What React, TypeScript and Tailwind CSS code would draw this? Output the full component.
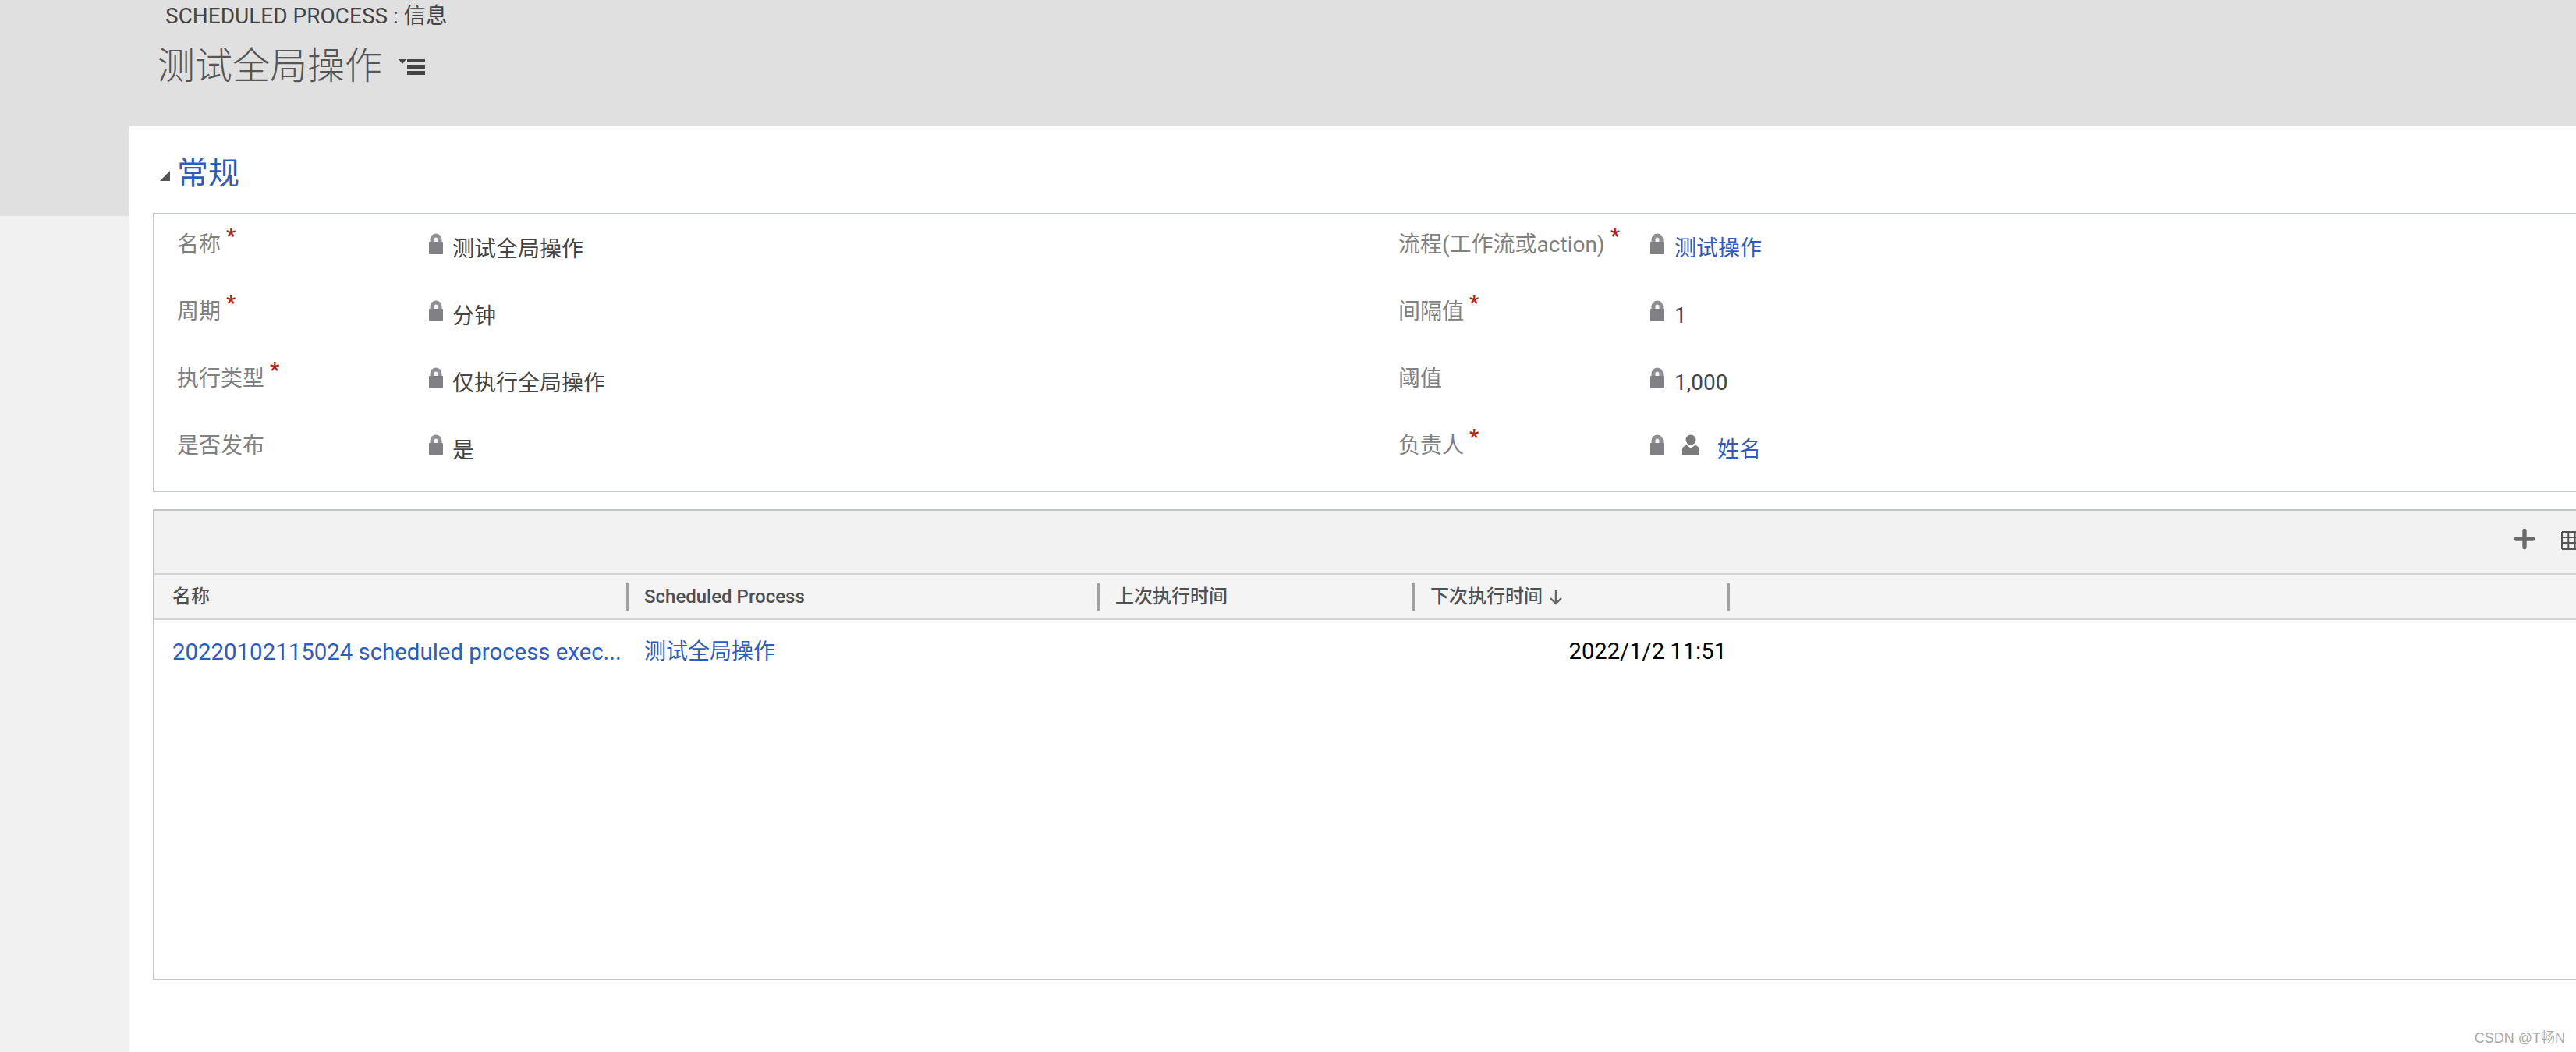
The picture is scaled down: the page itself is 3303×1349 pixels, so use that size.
import { Plus } from 'lucide-react'

const sans = "font-['Roboto','Noto_Sans_CJK_SC',sans-serif]"

function Lock() {
    return (
        <svg width="18" height="27" viewBox="0 0 18 27" className="shrink-0">
            <path d="M1.5 13V8a7.5 7.5 0 0 1 15 0v5z" fill="#909094" />
            <path d="M6.5 12V8a2.5 2.5 0 0 1 5 0v4z" fill="#f4f4f4" />
            <rect x="0" y="11" width="18" height="16" rx="1" fill="#808085" />
        </svg>
    )
}

function Star() {
    return <span className="text-[#b3261e] text-[27px] leading-none font-bold -translate-y-[5px] ml-[7px]">*</span>
}

function Field({ label, req, value, link, person, right }: { label: string; req?: boolean; value: string; link?: boolean; person?: boolean; right?: boolean }) {
    return (
        <div className="flex h-[86px]">
            <div className={`flex items-start pt-[20px] text-[#808080] text-[28px] leading-[38px] ${right ? 'w-[323px]' : 'w-[323px]'}`}>
                <span>{label}</span>
                {req && <Star />}
            </div>
            <div className={`flex items-start pt-[24px] ${right ? 'gap-[13px]' : 'gap-[12px]'}`}>
                <Lock />
                {person && (
                    <svg width="24" height="26" viewBox="0 0 24 26" className="shrink-0 mx-[9px]">
                        <circle cx="12" cy="7" r="6.5" fill="#7a7a7a" />
                        <path d="M1 26v-7c0-3 4-5 6-5l5 4 5-4c2 0 6 2 6 5v7z" fill="#7a7a7a" />
                    </svg>
                )}
                <span className={`text-[28px] leading-[36px] ${right ? 'mt-[2px]' : 'mt-[3px]'} ${link ? 'text-[#2f5cb8]' : 'text-[#444444]'}`}>{value}</span>
            </div>
        </div>
    )
}

function HeaderCell({ title, width, arrow, first }: { title: string; width: string; arrow?: boolean; first?: boolean }) {
    return (
        <div className={`flex items-center h-full ${first ? 'pl-[23px]' : 'pl-[20px]'} ${width}`}>
            <span className="text-[24px] text-[#505050] font-medium">{title}</span>
            {arrow && (
                <svg width="18" height="20" viewBox="0 0 18 20" className="ml-[8px] mt-[2px]">
                    <path d="M9 1v17M2 11l7 7 7-7" stroke="#666666" strokeWidth="2.4" fill="none" />
                </svg>
            )}
        </div>
    )
}

function Divider() {
    return <div className="w-[3px] h-[35px] bg-[#a0a0a0] shrink-0" />
}

export default function App() {
    return (
        <div className={`relative w-[3303px] h-[1349px] overflow-hidden bg-[#f0f0f0] ${sans}`}>
            <div className="h-[277px] bg-[#e0e0e0] pl-[202px]">
                <div className="pt-[2px] pl-[10px] text-[28px] leading-[38px] text-[#444444]">SCHEDULED PROCESS : 信息</div>
                <div className="flex items-center mt-[10px]">
                    <span className="text-[48px] leading-[70px] font-light text-[#555555]">测试全局操作</span>
                    <svg width="34" height="20" viewBox="0 0 34 20" className="ml-[21px] mt-[2px]">
                        <path d="M0 0h10l-5 6z" fill="#444444" />
                        <rect x="11" y="0" width="23" height="4" fill="#444444" />
                        <rect x="11" y="7" width="23" height="5" fill="#444444" />
                        <rect x="11" y="15" width="23" height="5" fill="#444444" />
                    </svg>
                </div>
            </div>
            <div className="absolute left-[166px] top-[162px] right-0 bottom-0 bg-white pl-[30px]">
                <div className="flex items-center h-[111px] pl-[9px] pt-[11px]">
                    <svg width="13" height="13" viewBox="0 0 13 13" className="mt-[4px]">
                        <path d="M13 0v13H0z" fill="#555555" />
                    </svg>
                    <span className="ml-[9px] text-[40px] leading-[56px] text-[#2f5cb8]">常规</span>
                </div>
                <div className="flex h-[358px] border-2 border-r-0 border-[#c2c6c6] pl-[29px]">
                    <div className="w-[1566px]">
                        <Field label="名称" req value="测试全局操作" />
                        <Field label="周期" req value="分钟" />
                        <Field label="执行类型" req value="仅执行全局操作" />
                        <Field label="是否发布" value="是" />
                    </div>
                    <div>
                        <Field right label="流程(工作流或action)" req value="测试操作" link />
                        <Field right label="间隔值" req value="1" />
                        <Field right label="阈值" value="1,000" />
                        <Field right label="负责人" req value="姓名" link person />
                    </div>
                </div>
                <div className="mt-[22px] h-[604px] border-2 border-r-0 border-[#c2c6c6] flex flex-col">
                    <div className="flex items-center justify-end h-[82px] pb-[8px] bg-[#f2f2f2] border-b-2 border-[#d4d4d4] shrink-0">
                        <Plus size={36} strokeWidth={3.6} className="text-[#6a6a6a] mr-[29px]" />
                        <svg width="19" height="24" viewBox="0 0 19 24" className="shrink-0 mt-[4px]">
                            <path d="M1 1h30M1 8h30M1 15h30M1 23h30M1 1v22M9.3 1v22M17.6 1v22" stroke="#555555" strokeWidth="2" fill="none" />
                        </svg>
                    </div>
                    <div className="flex items-center h-[58px] bg-[#f4f4f4] border-b-2 border-[#d4d4d4] shrink-0">
                        <HeaderCell first title="名称" width="w-[605px]" />
                        <Divider />
                        <HeaderCell title="Scheduled Process" width="w-[601px]" />
                        <Divider />
                        <HeaderCell title="上次执行时间" width="w-[401px]" />
                        <Divider />
                        <HeaderCell title="下次执行时间" width="w-[401px]" arrow />
                        <Divider />
                    </div>
                    <div className="flex items-center h-[82px] text-[28px] text-[#2f5cb8]">
                        <div className="w-[628px] pl-[23px] whitespace-nowrap text-[29.4px]">20220102115024 scheduled process exec...</div>
                        <div className="w-[500px]">测试全局操作</div>
                        <div className="w-[888px] text-right text-black text-[29.2px]">2022/1/2 11:51</div>
                    </div>
                </div>
            </div>
            <div className="absolute right-[14px] bottom-[6px] font-['Liberation_Sans','Noto_Sans_CJK_SC',sans-serif] text-[18px] leading-[24px] text-[#a8a8a8]">CSDN @T畅N</div>
        </div>
    )
}
